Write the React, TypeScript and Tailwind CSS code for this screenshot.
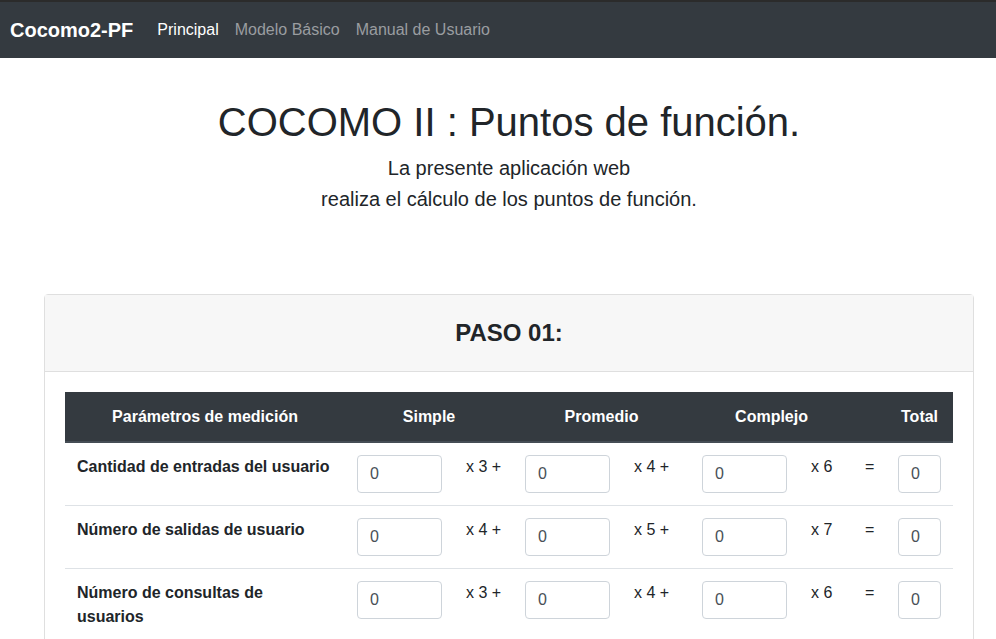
import React from 'react';

const rows = [
  { label: 'Cantidad de entradas del usuario', a: 3, b: 4, c: 6 },
  { label: 'Número de salidas de usuario', a: 4, b: 5, c: 7 },
  { label: 'Número de consultas de usuarios', a: 3, b: 4, c: 6 },
];

function NumInput({ wide = true }: { wide?: boolean }) {
  return (
    <input
      type="text"
      defaultValue="0"
      className={`${wide ? 'w-[85px]' : 'w-[43px]'} h-[38px] rounded border border-[#ced4da] bg-white px-3 text-base text-[#495057] outline-none`}
    />
  );
}

export default function App() {
  return (
    <div className="min-h-screen overflow-x-hidden bg-white font-['Liberation_Sans',Arial,sans-serif] text-[#212529]">
      {/* Navbar */}
      <nav className="flex h-[58px] items-center border-t-2 border-[#2b2b2b] bg-[#343a40] px-[10px]">
        <span className="mr-6 text-xl font-bold text-white">Cocomo2-PF</span>
        <ul className="flex gap-4 text-base">
          <li className="text-white">Principal</li>
          <li className="text-[#9a9da0]">Modelo Básico</li>
          <li className="text-[#9a9da0]">Manual de Usuario</li>
        </ul>
      </nav>

      <main className="w-[1018px]">
        <div className="pt-10 text-center">
          <h1 className="text-[40px] leading-[48px]">COCOMO II : Puntos de función.</h1>
          <p className="mt-[7px] text-xl leading-[31px]">
            La presente aplicación web
            <br />
            realiza el cálculo de los puntos de función.
          </p>
        </div>

        {/* Card */}
        <div className="mx-[44px] mt-[79px] rounded border border-[#dfdfdf]">
          <div className="flex h-[77px] items-center justify-center border-b border-[#dfdfdf] bg-[#f7f7f7]">
            <h3 className="text-2xl font-bold">PASO 01:</h3>
          </div>
          <div className="p-5">
            <table className="w-full table-fixed border-collapse text-base">
              <colgroup>
                <col className="w-[280px]" />
                <col className="w-[109px]" />
                <col className="w-[59px]" />
                <col className="w-[109px]" />
                <col className="w-[68px]" />
                <col className="w-[109px]" />
                <col className="w-[54px]" />
                <col className="w-[33px]" />
                <col className="w-[67px]" />
              </colgroup>
              <thead className="bg-[#343a40] font-bold text-white">
                <tr className="border-t border-[#343a40]">
                  <th className="border-b-2 border-[#454d55] p-3 leading-6">Parámetros de medición</th>
                  <th colSpan={2} className="border-b-2 border-[#454d55] p-3 leading-6">Simple</th>
                  <th colSpan={2} className="border-b-2 border-[#454d55] p-3 leading-6">Promedio</th>
                  <th colSpan={2} className="border-b-2 border-[#454d55] p-3 leading-6">Complejo</th>
                  <th className="border-b-2 border-[#454d55] p-3"></th>
                  <th className="border-b-2 border-[#454d55] p-3 leading-6">Total</th>
                </tr>
              </thead>
              <tbody>
                {rows.map((r, i) => (
                  <tr key={r.label} className={i > 0 ? 'border-t border-[#dee2e6]' : ''}>
                    <td className="p-3 align-top font-bold leading-6">{r.label}</td>
                    <td className="p-3 align-top"><NumInput /></td>
                    <td className="whitespace-nowrap p-3 align-top leading-6">x {r.a} +</td>
                    <td className="p-3 align-top"><NumInput /></td>
                    <td className="whitespace-nowrap p-3 align-top leading-6">x {r.b} +</td>
                    <td className="p-3 align-top"><NumInput /></td>
                    <td className="whitespace-nowrap p-3 align-top leading-6">x {r.c}</td>
                    <td className="p-3 align-top leading-6">=</td>
                    <td className="p-3 align-top"><NumInput wide={false} /></td>
                  </tr>
                ))}
              </tbody>
            </table>
          </div>
        </div>
      </main>
    </div>
  );
}
